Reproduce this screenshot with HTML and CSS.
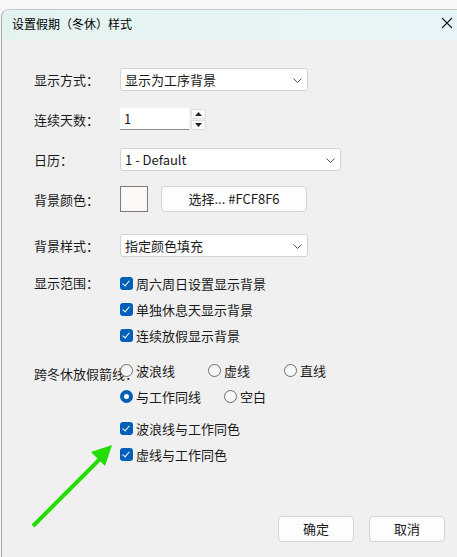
FILE: index.html
```html
<!DOCTYPE HTML>
<html>

<head>
    <meta charset="UTF-8">
    <title>设置假期（冬休）样式</title>
    <link rel="stylesheet" href="styles.css">
</head>

<body>
    <div class="window">
        <div class="titlebar">
            <span class="title">设置假期（冬休）样式</span>
            <svg class="close" width="12" height="12" viewBox="0 0 12 12">
                <path d="M1 1 L11 11 M11 1 L1 11" stroke="#1a1a1a" stroke-width="1.1" fill="none" />
            </svg>
        </div>

        <div class="content">
            <div class="row row-mode">
                <label>显示方式：</label>
                <div class="select w-short">显示为工序背景
                    <svg class="chevron" width="9" height="5" viewBox="0 0 9 5"><path d="M0.5 0.5 L4.5 4.5 L8.5 0.5" stroke="#555" fill="none" /></svg>
                </div>
            </div>

            <div class="row row-days">
                <label>连续天数：</label>
                <div class="number">1</div>
                <div class="spinner">
                    <div class="spin"><svg width="7" height="4" viewBox="0 0 7 4"><path d="M3.5 0 L7 4 L0 4 Z" fill="#222" /></svg></div>
                    <div class="spin"><svg width="7" height="4" viewBox="0 0 7 4"><path d="M0 0 L7 0 L3.5 4 Z" fill="#222" /></svg></div>
                </div>
            </div>

            <div class="row row-cal">
                <label>日历：</label>
                <div class="select w-long">1 - Default
                    <svg class="chevron" width="9" height="5" viewBox="0 0 9 5"><path d="M0.5 0.5 L4.5 4.5 L8.5 0.5" stroke="#555" fill="none" /></svg>
                </div>
            </div>

            <div class="row row-color">
                <label>背景颜色：</label>
                <div class="swatch" style="background: #FCF8F6;"></div>
                <div class="btn pick">选择... #FCF8F6</div>
            </div>

            <div class="row row-style">
                <label>背景样式：</label>
                <div class="select w-short">指定颜色填充
                    <svg class="chevron" width="9" height="5" viewBox="0 0 9 5"><path d="M0.5 0.5 L4.5 4.5 L8.5 0.5" stroke="#555" fill="none" /></svg>
                </div>
            </div>

            <div class="group group-range">
                <label>显示范围：</label>
                <div class="options">
                    <div class="opt"><span class="check"></span>周六周日设置显示背景</div>
                    <div class="opt"><span class="check"></span>单独休息天显示背景</div>
                    <div class="opt"><span class="check"></span>连续放假显示背景</div>
                </div>
            </div>

            <div class="group group-line">
                <label class="overflow">跨冬休放假箭线：</label>
                <div class="options">
                    <div class="opt">
                        <span class="radio-item wave"><span class="radio"></span>波浪线</span>
                        <span class="radio-item dash"><span class="radio"></span>虚线</span>
                        <span class="radio-item"><span class="radio"></span>直线</span>
                    </div>
                    <div class="opt">
                        <span class="radio-item same"><span class="radio on"></span>与工作同线</span>
                        <span class="radio-item"><span class="radio"></span>空白</span>
                    </div>
                </div>
            </div>

            <div class="group group-color">
                <label></label>
                <div class="options">
                    <div class="opt"><span class="check"></span>波浪线与工作同色</div>
                    <div class="opt"><span class="check"></span>虚线与工作同色</div>
                </div>
            </div>

            <div class="footer">
                <div class="btn action">确定</div>
                <div class="btn action">取消</div>
            </div>
        </div>
    </div>

    <!-- annotation arrow -->
    <svg class="arrow" width="120" height="110" viewBox="0 0 120 110">
        <path d="M6 86 L76 16" stroke="#22dd00" stroke-width="4" fill="none" />
        <path d="M85 5 L64 12 L78 26 Z" fill="#22dd00" />
    </svg>
</body>

</html>
```

FILE: styles.css
```css
body {
    margin: 0;
    background: #f7f7f7;
    font-family: "Noto Sans CJK SC", "Noto Sans", sans-serif;
    font-size: 13px;
    color: #1a1a1a;
    overflow: hidden;
}

.window {
    margin: 9px 0 0 1px;
    height: 548px;
    border-top: 1px solid #c9c9c9;
    border-left: 1px solid #a8a8a8;
    border-top-left-radius: 8px;
    background: #f0f0f0;
    overflow: hidden;
}

.titlebar {
    height: 30px;
    display: flex;
    align-items: center;
    justify-content: space-between;
    padding: 0 4px 0 10px;
    background: linear-gradient(to right, #e5f3f0, #e7f5f8);
}

.title {
    font-size: 12px;
    color: #000;
    margin-top: -4px;
}

.close {
    margin-top: -4px;
}

.content {
    padding-left: 32px;
}

.row {
    display: flex;
    align-items: center;
    height: 24px;
}

label {
    display: inline-block;
    width: 86px;
    flex: none;
    white-space: nowrap;
}

.row-mode { margin-top: 27px; }
.row-days { margin-top: 16px; }
.row-cal { margin-top: 16px; }
.row-color { margin-top: 15px; height: 26px; }
.row-style { margin-top: 21px; }

.select {
    position: relative;
    height: 22px;
    line-height: 22px;
    box-sizing: border-box;
    height: 23px;
    padding-left: 4px;
    background: #fff;
    border: 1px solid #d3d3d3;
    border-radius: 3px;
}

.w-short { width: 188px; }
.w-long { width: 221px; }

.chevron {
    position: absolute;
    right: 5px;
    top: 9px;
}

.number {
    width: 69px;
    height: 22px;
    line-height: 22px;
    box-sizing: border-box;
    padding-left: 4px;
    background: #fff;
    border-bottom: 1px solid #8a8a8a;
}

.spinner {
    display: flex;
    flex-direction: column;
    gap: 1px;
    margin-left: 2px;
}

.spin {
    width: 15px;
    height: 10px;
    box-sizing: border-box;
    background: #fafafa;
    border: 1px solid #dcdcdc;
    border-radius: 2px;
    display: flex;
    align-items: center;
    justify-content: center;
}

.swatch {
    width: 28px;
    height: 26px;
    box-sizing: border-box;
    border: 1px solid #7a7a7a;
}

.btn {
    box-sizing: border-box;
    height: 26px;
    line-height: 24px;
    text-align: center;
    background: #fdfdfd;
    border: 1px solid #d3d3d3;
    border-radius: 4px;
}

.pick {
    width: 146px;
    margin-left: 13px;
}

.group {
    display: flex;
}

.group label {
    height: 26px;
    line-height: 26px;
}

.group-range { margin-top: 13px; }
.group-line { margin-top: 9px; }
.group-color { margin-top: 6px; }

.group-line label {
    line-height: 34px;
}

.options {
    display: flex;
    flex-direction: column;
}

.opt {
    display: flex;
    align-items: center;
    height: 26px;
    white-space: nowrap;
}

.check {
    width: 13px;
    height: 13px;
    margin-right: 3px;
    border-radius: 3px;
    background: #005fb8;
    position: relative;
}

.check::after {
    content: "";
    position: absolute;
    left: 4px;
    top: 2px;
    width: 3px;
    height: 6px;
    border: solid #fff;
    border-width: 0 1px 1px 0;
    transform: rotate(40deg);
}

.radio-item {
    display: inline-flex;
    align-items: center;
}

.wave { width: 88px; }
.dash { width: 76px; }
.same { width: 104px; }

.radio {
    width: 13px;
    height: 13px;
    box-sizing: border-box;
    margin-right: 3px;
    border: 1px solid #6e6e6e;
    border-radius: 50%;
    background: #f7f7f7;
}

.radio.on {
    border: 4px solid #005fb8;
    background: #fff;
}

.footer {
    display: flex;
    justify-content: flex-end;
    gap: 15px;
    margin-top: 49px;
    padding-right: 12px;
}

.action {
    width: 76px;
}

.arrow {
    position: absolute;
    left: 27px;
    top: 440px;
}
```
